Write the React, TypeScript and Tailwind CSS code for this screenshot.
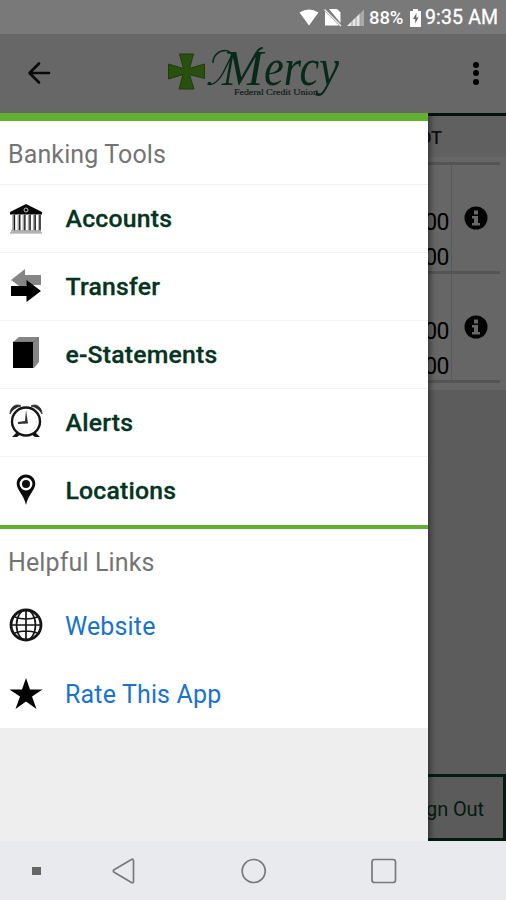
import type { ReactNode } from "react";

function StatusBar() {
  return (
    <div className="flex h-[34px] items-center bg-[#797979] pt-[2px] pl-[299px] text-white">
      <svg className="h-[34px] w-[66px] shrink-0" viewBox="0 0 66 34" fill="none">
        <path d="M10 24.500 0.500 11.500Q10 5.500 19.500 11.500Z" fill="#fff" />
        <path d="M30 8h8l3.500 3.500V22Z" fill="#fff" />
        <path d="M26 10.500 40 24.500H26Z" fill="#fff" />
        <path d="m25.500 8.500 16.500 16.500" stroke="#eee" strokeWidth="1.400" />
        <path d="M48 25 65 8.500V25Z" fill="#aaa" />
        <path d="M48 25 61 12.500V25Z" fill="#e8e8e8" />
        <path d="M53 20v5M57 16v9M61 12v13" stroke="#969696" strokeWidth="0.900" />
      </svg>
      <span className="ml-[4px] w-[36px] shrink-0 text-[18.500px] leading-none font-medium tracking-[-0.100px] whitespace-nowrap">88%</span>
      <svg className="ml-[5px] h-[18px] w-[11px] shrink-0" viewBox="0 0 11 18">
        <path d="M3 0h5v2h3v16H0V2h3Z" fill="#fff" />
        <path d="M6.500 4 3 10h2.200v4.500L8.500 8.500H6.200Z" fill="#676767" />
      </svg>
      <span className="ml-[4px] shrink-0 text-[19.500px] leading-none tracking-[0.150px] whitespace-nowrap [-webkit-text-stroke:0.300px_white]">9:35 AM</span>
    </div>
  );
}

function Logo() {
  return (
    <svg className="h-[64px] w-[184px]" viewBox="160 40 184 64" fill="none">
      <path
        d="M179.500 53h14l-4 14.500 15-4.500v14.500l-15-4L194 88h-15l4-14.500-14.500 4.500V63l15 4.500Z"
        fill="#29500f"
        stroke="#1c3d0a"
        strokeWidth="1"
      />
      <path d="M213 61.500c0-7 6-12 12-12 5 0 7 3 9 8M208 83c6 2 11-4 15-11l10-20" stroke="#06291a" strokeWidth="1.500" strokeLinecap="round" />
      <circle cx="209.500" cy="82.500" r="1.800" fill="#06291a" />
      <text x="222" y="84" textLength="41" lengthAdjust="spacingAndGlyphs" fontFamily="'Liberation Serif', serif" fontStyle="italic" fontSize="50" fill="#06291a">M</text>
      <path d="M257 51q2-3.500 5-4" stroke="#06291a" strokeWidth="2" strokeLinecap="round" />
      <text x="264" y="84" textLength="75" lengthAdjust="spacingAndGlyphs" fontFamily="'Liberation Serif', serif" fontStyle="italic" fontSize="53" fill="#06291a">ercy</text>
      <text x="234" y="94" textLength="84" lengthAdjust="spacingAndGlyphs" fontFamily="'Liberation Serif', serif" fontSize="9" fill="#10211a" stroke="#10211a" strokeWidth="0.200">Federal Credit Union</text>
    </svg>
  );
}

function Header() {
  return (
    <header className="flex h-[79px] items-center bg-[#676767] pb-[1px]">
      <svg className="ml-[27px] h-[24px] w-[24px]" viewBox="0 0 24 24" fill="none" stroke="#090909" strokeWidth="2.600" strokeLinecap="round" strokeLinejoin="round">
        <path d="M12 2.500 2.500 12l9.500 9.500M3 12h19" />
      </svg>
      <div className="ml-[109px]"><Logo /></div>
      <div className="ml-[129px] flex flex-col gap-[2.500px]">
        <i className="size-[6px] rounded-full bg-black" />
        <i className="size-[6px] rounded-full bg-black" />
        <i className="size-[6px] rounded-full bg-black" />
      </div>
    </header>
  );
}

const Bank = () => (
  <svg className="mb-[2px] size-[34px]" viewBox="0 0 34 34" fill="none">
    <path d="M17 3 33 11v2.500H1V11Z" fill="#080808" />
    <circle cx="17" cy="9" r="2" stroke="#bbb" />
    <path d="M4.500 13.500v16M9.800 13.500v16M14.900 13.500v16M20.100 13.500v16M25.200 13.500v16M30.500 13.500v16" stroke="#a5a5a5" strokeWidth="2.600" />
    <path d="M5.500 13.500v16M10.800 13.500v16M15.900 13.500v16M21.100 13.500v16M26.200 13.500v16M31 13.500v16" stroke="#171717" strokeWidth="1.300" />
    <path d="M2 30h30M1 31.800h32" stroke="#999" strokeWidth="1.300" />
  </svg>
);
const Transfer = () => (
  <svg className="mb-[4px] size-[34px]" viewBox="0 0 34 34">
    <path d="M2 12 16 1v6h16v10H17v6Z" fill="#858585" />
    <path d="M2 18h15.500v-6L32 23 17.500 34v-6H2Z" fill="#000" />
  </svg>
);
const Book = () => (
  <svg className="mb-[4px] size-[34px]" viewBox="0 0 34 34">
    <path d="m4 6 6-5h20v25l-5 6H4Z" fill="#858585" />
    <path d="M4 6h21l5-5" fill="none" stroke="#666" strokeWidth="0.600" />
    <path d="M4 6h20v26H4Z" fill="#000" />
  </svg>
);
const Clock = () => (
  <svg className="mb-[4px] size-[34px]" viewBox="0 0 34 34" fill="none">
    <path d="m8 28-5 5h5l4-3Zm18 0 5 5h-5l-4-3Z" fill="#151515" />
    <circle cx="17" cy="17.500" r="14" stroke="#151515" strokeWidth="2.400" />
    <path d="M1 10C1 3 7-1 12 2 7 3 3 6 1 10Zm32 0c0-7-6-11-11-8 5 1 9 4 11 8Z" fill="#292929" stroke="#292929" strokeWidth="0.800" />
    <path d="m17 6 2 13.500-10 .5v-2l7-1Z" fill="#333" />
    <circle cx="17" cy="17.500" r="10.500" stroke="#ccc" strokeWidth="1" strokeDasharray="1 4.500" />
  </svg>
);
const Pin = () => (
  <svg className="mb-[2px] size-[34px]" viewBox="0 0 34 34">
    <path d="M17 1.500c-5.200 0-9.300 4-9.300 9.300C7.700 17 15 22 17 32 19 22 26.300 17 26.300 10.800c0-5.300-4.100-9.300-9.300-9.300Z" fill="#0b0b0b" />
    <circle cx="17" cy="11" r="5.200" fill="#111" stroke="#fff" strokeWidth="2.400" />
  </svg>
);
const Globe = () => (
  <svg className="mb-[2px] size-[34px]" viewBox="0 0 34 34" fill="none" stroke="#151515">
    <circle cx="17" cy="17" r="15" strokeWidth="2.800" />
    <path d="M17 2v30M2 17h30M5.500 9q11.500 4 23 0M5.500 25q11.500-4 23 0" strokeWidth="1.700" />
    <ellipse cx="17" cy="17" rx="9.500" ry="15" strokeWidth="1.700" />
  </svg>
);
const Star = () => (
  <svg className="mb-[1px] size-[34px]" viewBox="0 0 34 34">
    <path d="m17 1 4 11.500h12.500L23 19.500l4.500 12.500L17 24.500 6.500 32 11 19.500.5 12.500H13Z" fill="#000" />
  </svg>
);

function Item({ icon, last, children }: { icon: ReactNode; last?: boolean; children: ReactNode }) {
  return (
    <div className={`flex h-[68px] items-center pl-[9px] ${last ? "" : "border-b border-[#f3f3f3]"}`}>
      {icon}
      <span className="ml-[22.500px] pt-[1px] text-[24.800px] leading-none font-medium tracking-[0.200px] whitespace-nowrap text-[#06351f] [-webkit-text-stroke:0.300px_#06351f]">{children}</span>
    </div>
  );
}

function LinkItem({ icon, children }: { icon: ReactNode; children: ReactNode }) {
  return (
    <div className="flex h-[68px] items-center pl-[9px]">
      {icon}
      <span className="ml-[22px] text-[25px] leading-none tracking-[0.150px] whitespace-nowrap text-[#1973d0]">{children}</span>
    </div>
  );
}

function Drawer() {
  return (
    <aside className="z-10 w-[428px] shrink-0 bg-[#eeeeee] shadow-[2px_0_6px_rgba(0,0,0,0.5)]">
      <div className="border-t-[8px] border-[#62b02f] bg-white">
        <h2 className="flex h-[64px] items-center border-b border-[#f0f0f0] pt-[3px] pl-[8px] text-[25px] leading-none tracking-[0.120px] text-[#747474]">Banking Tools</h2>
        <Item icon={<Bank />}>Accounts</Item>
        <Item icon={<Transfer />}>Transfer</Item>
        <Item icon={<Book />}>e-Statements</Item>
        <Item icon={<Clock />}>Alerts</Item>
        <Item icon={<Pin />} last>Locations</Item>
      </div>
      <div className="border-t-[4px] border-[#62b02f] bg-white">
        <h2 className="flex h-[63px] items-center pt-[4px] pl-[8px] text-[25px] leading-none tracking-[0.120px] text-[#747474]">Helpful Links</h2>
        <LinkItem icon={<Globe />}>Website</LinkItem>
        <LinkItem icon={<Star />}>Rate This App</LinkItem>
      </div>
    </aside>
  );
}

function Info() {
  return (
    <svg className="size-[24px]" viewBox="0 0 24 24">
      <circle cx="12" cy="12" r="11.500" fill="#030303" />
      <path d="M10 4.500h4v4h-4ZM8 10h6v7h2v2.500H8V17h2v-4.500H8Z" fill="#686868" />
    </svg>
  );
}

function AccountRow() {
  return (
    <div className="mr-[6px] flex h-[109px] border-b-[3px] border-[#545454]">
      <div className="flex w-[24px] flex-col items-end justify-end gap-[9px] overflow-hidden border-r border-[#595959] pr-[2px] text-[23px] leading-[26px] tracking-[-0.500px] text-black">
        <span>00</span>
        <span>00</span>
      </div>
      <div className="flex flex-1 items-center justify-center"><Info /></div>
    </div>
  );
}

function AccountsPane() {
  return (
    <main className="flex min-w-0 flex-1 flex-col overflow-hidden bg-[#5c5c5c]">
      <div className="h-[277px] shrink-0 bg-[#666666]">
        <div className="flex h-[44px] items-center border-t-[3px] border-[#03140c] bg-[#606060] pt-[2px] text-[18px] font-medium text-[#101010]">
          <span className="-ml-[9px]">OT</span>
        </div>
        <div className="mr-[6px] h-[8px] border-b-[3px] border-[#545454]" />
        <AccountRow />
        <AccountRow />
      </div>
      <div className="mt-auto h-[67px] border-y-[3px] border-r-[3px] border-[#031b11] bg-[#5b5b5b]">
        <div className="flex h-full items-center justify-end pt-[2px] pr-[19px] text-[20px] tracking-[-0.100px] whitespace-nowrap text-[#061b12]">Sign Out</div>
      </div>
    </main>
  );
}

function NavBar() {
  return (
    <nav className="h-[59px] bg-[#e8eaed]">
      <svg className="h-[59px] w-[506px]" viewBox="0 841 506 59" fill="none" stroke="#77797b" strokeWidth="1.700" strokeLinejoin="round">
        <path d="M32 867h9v8h-9Z" fill="#666" stroke="none" />
        <path d="M131.500 859.500q2-1 2 1.500v20q0 2.500-2 1.500l-17-10q-2.500-1.500 0-3Z" />
        <circle cx="253.700" cy="871" r="11.500" />
        <rect x="372" y="859.500" width="23.500" height="23" rx="2.500" />
      </svg>
    </nav>
  );
}

export default function App() {
  return (
    <div className="flex h-[900px] w-[506px] flex-col overflow-hidden font-['Roboto',sans-serif]">
      <StatusBar />
      <Header />
      <div className="flex h-[728px] overflow-hidden">
        <Drawer />
        <AccountsPane />
      </div>
      <NavBar />
    </div>
  );
}
